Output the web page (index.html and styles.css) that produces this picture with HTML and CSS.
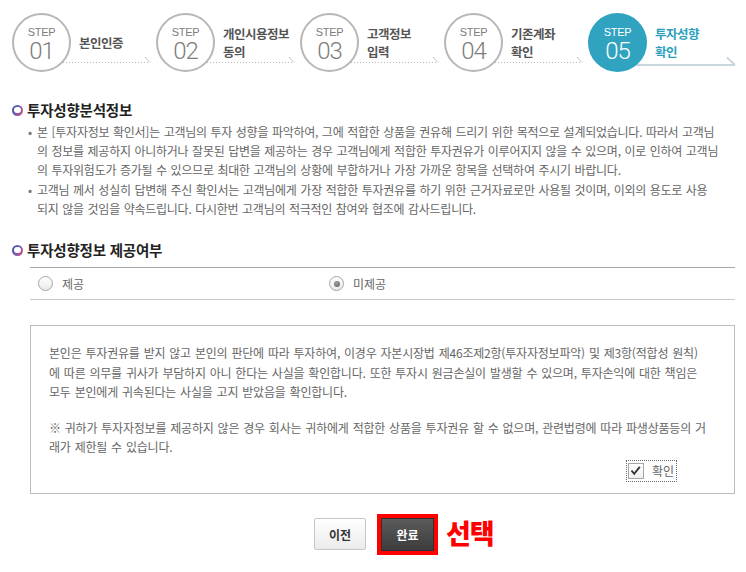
FILE: index.html
```html
<!DOCTYPE html>
<html lang="ko">
<head>
<meta charset="utf-8">
<title>투자성향 확인</title>
<link rel="stylesheet" href="styles.css">
</head>
<body>
<div class="steps">
  <div class="step">
    <svg class="step-line" width="144" height="59" viewBox="0 0 144 59"><line x1="30" y1="49.5" x2="138" y2="49.5" stroke="#b9b9b9" stroke-dasharray="1 2"/><line x1="133" y1="44" x2="138" y2="49.5" stroke="#c4c4c4"/></svg>
    <div class="circle"><span class="s">STEP</span><span class="n">01</span></div>
    <div class="label">본인인증</div>
  </div>
  <div class="step">
    <svg class="step-line" width="144" height="59" viewBox="0 0 144 59"><line x1="30" y1="49.5" x2="138" y2="49.5" stroke="#b9b9b9" stroke-dasharray="1 2"/><line x1="133" y1="44" x2="138" y2="49.5" stroke="#c4c4c4"/></svg>
    <div class="circle"><span class="s">STEP</span><span class="n">02</span></div>
    <div class="label">개인시용정보<br>동의</div>
  </div>
  <div class="step">
    <svg class="step-line" width="144" height="59" viewBox="0 0 144 59"><line x1="30" y1="49.5" x2="138" y2="49.5" stroke="#b9b9b9" stroke-dasharray="1 2"/><line x1="133" y1="44" x2="138" y2="49.5" stroke="#c4c4c4"/></svg>
    <div class="circle"><span class="s">STEP</span><span class="n">03</span></div>
    <div class="label">고객정보<br>입력</div>
  </div>
  <div class="step">
    <svg class="step-line" width="144" height="59" viewBox="0 0 144 59"><line x1="30" y1="49.5" x2="138" y2="49.5" stroke="#b9b9b9" stroke-dasharray="1 2"/><line x1="133" y1="44" x2="138" y2="49.5" stroke="#c4c4c4"/></svg>
    <div class="circle"><span class="s">STEP</span><span class="n">04</span></div>
    <div class="label">기존계좌<br>확인</div>
  </div>
  <div class="step step-on">
    <svg class="step-line" width="158" height="59" viewBox="0 0 158 59"><line x1="30" y1="52" x2="147" y2="52" stroke="#c9d6de" stroke-width="2"/><line x1="139" y1="44.5" x2="147" y2="52" stroke="#c9d6de" stroke-width="2"/></svg>
    <div class="circle"><span class="s">STEP</span><span class="n">05</span></div>
    <div class="label">투자성향<br>확인</div>
  </div>
</div>

<h2 class="sec-title"><span class="ring"></span>투자성향분석정보</h2>
<ul class="bullets">
  <li>본 [투자자정보 확인서]는 고객님의 투자 성향을 파악하여, 그에 적합한 상품을 권유해 드리기 위한 목적으로 설계되었습니다. 따라서 고객님<br>의 정보를 제공하지 아니하거나 잘못된 답변을 제공하는 경우 고객님에게 적합한 투자권유가 이루어지지 않을 수 있으며, 이로 인하여 고객님<br>의 투자위험도가 증가될 수 있으므로 최대한 고객님의 상황에 부합하거나 가장 가까운 항목을 선택하여 주시기 바랍니다.</li>
  <li>고객님 께서 성실히 답변해 주신 확인서는 고객님에게 가장 적합한 투자권유를 하기 위한 근거자료로만 사용될 것이며, 이외의 용도로 사용<br>되지 않을 것임을 약속드립니다. 다시한번 고객님의 적극적인 참여와 협조에 감사드립니다.</li>
</ul>

<h2 class="sec-title sec-2"><span class="ring"></span>투자성향정보 제공여부</h2>
<div class="radio-row">
  <div class="opt"><span class="radio"></span>제공</div>
  <div class="opt"><span class="radio radio-on"></span>미제공</div>
</div>

<div class="notice">
  <p>본인은 투자권유를 받지 않고 본인의 판단에 따라 투자하여, 이경우 자본시장법 제46조제2항(투자자정보파악) 및 제3항(적합성 원칙)<br>에 따른 의무를 귀사가 부담하지 아니 한다는 사실을 확인합니다. 또한 투자시 원금손실이 발생할 수 있으며, 투자손익에 대한 책임은<br>모두 본인에게 귀속된다는 사실을 고지 받았음을 확인합니다.</p>
  <p>※ 귀하가 투자자정보를 제공하지 않은 경우 회사는 귀하에게 적합한 상품을 투자권유 할 수 없으며, 관련법령에 따라 파생상품등의 거<br>래가 제한될 수 있습니다.</p>
  <div class="check-row">
    <span class="check-wrap"><span class="checkbox"><svg width="13" height="13" viewBox="0 0 13 13"><path d="M2.5 6.5 L5.2 9.8 L10.8 2.8" fill="none" stroke="#333" stroke-width="1.9"/></svg></span>확인</span>
  </div>
</div>

<div class="buttons">
  <button class="btn btn-prev" type="button">이전</button>
  <span class="mark">
    <button class="btn btn-done" type="button">완료</button>
    <span class="mark-text">선택</span>
  </span>
</div>
</body>
</html>
```

FILE: styles.css
```css
body {
  margin: 0;
  background: #fff;
  color: #666;
  font-family: "Noto Sans CJK KR", "Noto Sans", sans-serif;
}

.steps {
  display: flex;
  padding: 13px 0 0 12px;
  height: 59px;
  margin-bottom: 28px;
}

.step {
  position: relative;
  flex: none;
  width: 144px;
  display: flex;
  align-items: center;
}

.step-line {
  position: absolute;
  left: 0;
  top: 0;
}

.circle {
  position: relative;
  z-index: 1;
  box-sizing: border-box;
  width: 59px;
  height: 59px;
  border: 2px solid #b7b7b7;
  border-radius: 50%;
  background: #fff;
  display: flex;
  flex-direction: column;
  align-items: center;
  justify-content: center;
  padding-top: 3px;
  color: #7d7d7d;
}

.circle .s {
  font-family: "Liberation Sans", Arial, sans-serif;
  font-size: 11px;
  line-height: 12px;
  letter-spacing: -0.3px;
}

.circle .n {
  font-family: Roboto, "Open Sans", sans-serif;
  font-weight: 300;
  font-size: 24px;
  line-height: 24px;
  letter-spacing: -1px;
  margin-top: 1px;
}

.label {
  position: relative;
  z-index: 1;
  margin-left: 8px;
  font-size: 12.5px;
  font-weight: 700;
  line-height: 18px;
  letter-spacing: -0.5px;
  color: #555;
}

.step-on .circle {
  background: #2fa3bf;
  border-color: #2fa3bf;
  color: #fff;
}

.step-on .label {
  color: #2c9fbd;
}

.sec-title {
  display: flex;
  align-items: center;
  margin: 0 0 0 12px;
  font-size: 14.5px;
  font-weight: 700;
  line-height: 20px;
  letter-spacing: -0.2px;
  color: #222;
}

.sec-2 {
  margin-top: 22px;
}

.ring {
  position: relative;
  width: 11px;
  height: 11px;
  border-radius: 50%;
  margin-right: 4px;
  background: linear-gradient(120deg, #2c4fae 0%, #6d5bb0 45%, #e24f7b 100%);
}

.ring::after {
  content: "";
  position: absolute;
  inset: 2.2px;
  border-radius: 50%;
  background: #fff;
}

.bullets {
  list-style: none;
  margin: 2px 0 0;
  padding: 0 0 0 37px;
  font-size: 12px;
  line-height: 19px;
  letter-spacing: -0.25px;
  word-spacing: 0.6px;
  white-space: nowrap;
}

.bullets li {
  position: relative;
}

.bullets li + li {
  margin-top: 1px;
}

.bullets li::before {
  content: "•";
  position: absolute;
  left: -9px;
  top: 0;
  color: #777;
}

.radio-row {
  display: grid;
  grid-template-columns: 291px 1fr;
  align-items: center;
  height: 31px;
  margin: 7px 11px 0 30px;
  border-top: 1px solid #a9a9a9;
  border-bottom: 1px solid #c9c9c9;
  font-size: 12px;
  color: #666;
}

.opt {
  display: flex;
  align-items: center;
  gap: 9px;
  padding-left: 8px;
}

.radio {
  position: relative;
  box-sizing: border-box;
  width: 15px;
  height: 15px;
  border: 1px solid #a5a5a5;
  border-radius: 50%;
  background: linear-gradient(#ffffff, #e9e9e9);
}

.radio-on::after {
  content: "";
  position: absolute;
  left: 3.5px;
  top: 3.5px;
  width: 6px;
  height: 6px;
  border-radius: 50%;
  background: radial-gradient(circle at 40% 35%, #a0a0a0, #5e5e5e);
}

.notice {
  margin: 25px 11px 0 30px;
  border: 1px solid #bcbcbc;
  padding: 17px 20px 12px 18px;
  font-size: 12px;
  line-height: 19.5px;
  letter-spacing: -0.2px;
  word-spacing: 0.8px;
  color: #666;
  white-space: nowrap;
}

.notice p {
  margin: 0;
}

.notice p + p {
  margin-top: 16px;
}

.check-row {
  display: flex;
  justify-content: flex-end;
  margin-top: 4px;
  padding-right: 38px;
}

.check-wrap {
  display: flex;
  align-items: center;
  gap: 8px;
  padding: 1px 2px 1px 1px;
  outline: 1px dotted #666;
  line-height: 18px;
  letter-spacing: 0;
}

.checkbox {
  box-sizing: border-box;
  width: 16px;
  height: 16px;
  border: 1px solid #a5a5a5;
  background: linear-gradient(#fff, #f0f0f0);
  display: flex;
  align-items: center;
  justify-content: center;
}

.buttons {
  display: flex;
  justify-content: center;
  align-items: center;
  gap: 11px;
  margin-top: 20px;
  padding-left: 6px;
}

.btn {
  font-family: "Noto Sans CJK KR", sans-serif;
  font-size: 12px;
  font-weight: 700;
  padding: 0;
  cursor: pointer;
}

.btn-prev {
  width: 52px;
  height: 32px;
  border: 1px solid #c6c6c6;
  border-radius: 2px;
  background: linear-gradient(#ffffff, #ebebeb);
  color: #333;
}

.mark {
  position: relative;
  display: flex;
  border: 4px solid #ff0000;
}

.btn-done {
  width: 53px;
  height: 33px;
  border: 1px solid #2f2f2f;
  background: linear-gradient(#5b5b5b, #3c3c3c);
  color: #fff;
}

.mark-text {
  position: absolute;
  left: calc(100% + 12px);
  top: 50%;
  transform: translateY(-54%);
  font-size: 27px;
  font-weight: 900;
  line-height: 1;
  letter-spacing: -1px;
  color: #ff0000;
  white-space: nowrap;
}
```
